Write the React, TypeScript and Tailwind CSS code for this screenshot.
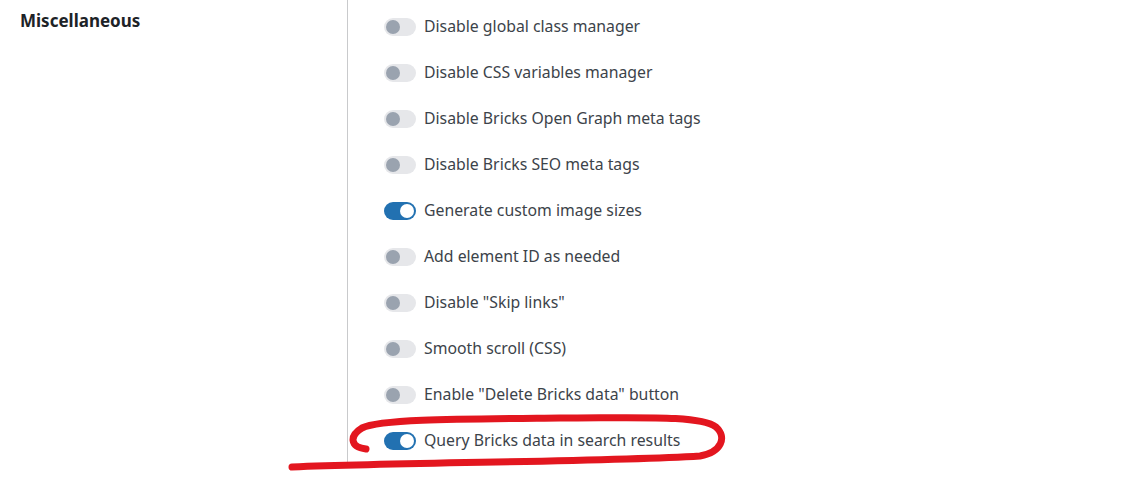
const items: { label: string; on: boolean }[] = [
  { label: 'Disable global class manager', on: false },
  { label: 'Disable CSS variables manager', on: false },
  { label: 'Disable Bricks Open Graph meta tags', on: false },
  { label: 'Disable Bricks SEO meta tags', on: false },
  { label: 'Generate custom image sizes', on: true },
  { label: 'Add element ID as needed', on: false },
  { label: 'Disable "Skip links"', on: false },
  { label: 'Smooth scroll (CSS)', on: false },
  { label: 'Enable "Delete Bricks data" button', on: false },
  { label: 'Query Bricks data in search results', on: true },
]

function Toggle({ on }: { on: boolean }) {
  return (
    <span
      className={
        on
          ? 'flex h-[18px] w-[32px] items-center justify-end rounded-full bg-[#2271b1] px-[2px]'
          : 'flex h-[18px] w-[32px] items-center justify-start rounded-full bg-[#e6e7ea] px-[2px]'
      }
    >
      <span className={on ? 'h-[14px] w-[14px] rounded-full bg-white' : 'h-[14px] w-[14px] rounded-full bg-[#9aa3af]'} />
    </span>
  )
}

export default function App() {
  return (
    <div className="relative h-[477px] w-[1136px] overflow-hidden bg-white font-['Noto_Sans',sans-serif]">
      <div className="flex">
        <div className="w-[347px] shrink-0 pl-[20px] pt-[8px] text-[17px] font-bold text-[#1d2327]">Miscellaneous</div>
        <div className="flex flex-col border-l border-[#c9cacc] pl-[36px] pt-[4px]">
          {items.map((item) => (
            <div key={item.label} className="flex h-[46px] items-center gap-[8px]">
              <Toggle on={item.on} />
              <span className="text-[15.8px] text-[#3c434a]">{item.label}</span>
            </div>
          ))}
        </div>
      </div>
      <svg className="pointer-events-none absolute left-0 top-0" width="1136" height="477" viewBox="0 0 1136 477">
        <path
          d="M 366 449 C 350 447, 349 436, 362 428 C 380 419, 460 419, 560 418 C 640 418, 700 415, 716 427 C 727 437, 722 452, 700 456 C 600 462, 420 462, 292 467"
          fill="none"
          stroke="#e3161f"
          strokeWidth="7"
          strokeLinecap="round"
          strokeLinejoin="round"
        />
      </svg>
    </div>
  )
}
